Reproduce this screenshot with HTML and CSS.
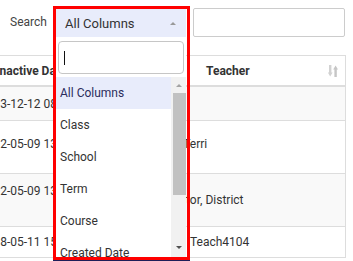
FILE: index.html
```html
<!DOCTYPE html>
<html>
<head>
<meta charset="utf-8">
<link rel="stylesheet" href="styles.css">
</head>
<body>
<div class="page">
  <div class="toolbar">
    <label class="search-label">Search</label>
    <div class="s2">
      <div class="s2-selection"><span class="s2-text">All Columns</span><span class="s2-arrow"></span></div>
      <div class="s2-dropdown">
        <div class="s2-search"><div class="s2-field"><span class="caret"></span></div></div>
        <div class="s2-results">
          <ul class="s2-options">
            <li class="opt active">All Columns</li>
            <li class="opt">Class</li>
            <li class="opt">School</li>
            <li class="opt">Term</li>
            <li class="opt">Course</li>
            <li class="opt">Created Date</li>
          </ul>
          <div class="sb">
            <div class="sb-btn sb-up"></div>
            <div class="sb-thumb"></div>
            <div class="sb-btn sb-down"></div>
          </div>
        </div>
      </div>
    </div>
    <input class="search-input" type="text">
  </div>
  <table class="grid">
    <colgroup><col class="c1"><col class="c2"><col class="c3"></colgroup>
    <thead>
      <tr>
        <th>Inactive Date</th>
        <th></th>
        <th class="th-sort"><div class="th-inner"><span>Teacher</span>
          <svg class="sort-icon" width="10" height="12" viewBox="0 0 10 12"><path d="M1 0h2.4v7.5H4.6L2.2 11.5 -0.2 7.5H1z" fill="#d2d2d2"/><path d="M6.4 12h2.4V4.5H10L7.6 0.5 5.2 4.5H6.4z" fill="#c6c6c6"/></svg>
        </div></th>
      </tr>
    </thead>
    <tbody>
      <tr class="stripe r1"><td>2013-12-12 08:14:32</td><td></td><td></td></tr>
      <tr class="r2"><td>2012-05-09 13:22:10</td><td></td><td class="shift-a">Smith, Terri</td></tr>
      <tr class="stripe r3"><td>2012-05-09 13:22:<br>10</td><td></td><td class="shift-b">Administrator, District</td></tr>
      <tr class="r4"><td>2018-05-11 15:03:47</td><td></td><td>Teach4104</td></tr>
    </tbody>
  </table>
</div>
<div class="annot"></div>
</body>
</html>
```
FILE: styles.css
```css
body {
  margin: 0;
  width: 353px;
  height: 261px;
  overflow: hidden;
  position: relative;
  background: #fff;
  color: #333;
  font-family: Roboto, "Liberation Sans", sans-serif;
}

.toolbar {
  display: flex;
  align-items: flex-start;
  padding-top: 8px;
  height: 29px;
}

.search-label {
  width: 46px;
  padding-left: 10px;
  font-size: 12px;
  line-height: 29px;
  color: #444;
}

.s2 {
  position: relative;
  width: 130px;
  margin-top: 1px;
}

.s2-selection {
  height: 28px;
  background: #e8ecfb;
  display: flex;
  align-items: center;
  justify-content: space-between;
  padding: 0 10px 0 9px;
  font-size: 13px;
  color: #333;
}

.s2-arrow {
  width: 0;
  height: 0;
  border-left: 3px solid transparent;
  border-right: 3px solid transparent;
  border-bottom: 3px solid #999;
}

.search-input {
  margin: 0 0 0 7px;
  width: 152px;
  height: 29px;
  box-sizing: border-box;
  border: 1px solid #ccc;
  border-radius: 2px;
  padding: 0;
  outline: none;
}

.s2-dropdown {
  position: absolute;
  top: 28px;
  left: 0;
  width: 130px;
  background: #fff;
  z-index: 2;
}

.s2-search {
  padding: 4px 2px 3px 2px;
}

.s2-field {
  height: 33px;
  box-sizing: border-box;
  border: 1px solid #c6c6c6;
  border-radius: 4px;
  display: flex;
  align-items: center;
  padding-left: 5px;
}

.caret {
  width: 1px;
  height: 14px;
  background: #111;
}

.s2-results {
  display: flex;
  height: 180px;
}

.s2-options {
  list-style: none;
  margin: 0;
  padding: 0;
  flex: 1;
  overflow: hidden;
}

.opt {
  height: 32px;
  line-height: 32px;
  padding-left: 4px;
  font-size: 12px;
  color: #333;
  white-space: nowrap;
}

.opt.active {
  background: #e8ecfb;
  color: #2b2d5c;
}

.sb {
  width: 15px;
  background: #f1f1f1;
  display: flex;
  flex-direction: column;
}

.sb-btn {
  height: 15px;
  box-sizing: border-box;
  display: flex;
  justify-content: center;
  flex: none;
}

.sb-up {
  padding-top: 7px;
}

.sb-up::before {
  content: "";
  width: 0;
  height: 0;
  border-left: 3px solid transparent;
  border-right: 3px solid transparent;
  border-bottom: 3px solid #a3a3a3;
}

.sb-thumb {
  margin: 1px 0 0 2px;
  height: 102px;
  background: #c1c1c1;
  flex: none;
}

.sb-down {
  margin-top: auto;
  padding-top: 4px;
}

.sb-down::before {
  content: "";
  width: 0;
  height: 0;
  border-left: 3px solid transparent;
  border-right: 3px solid transparent;
  border-top: 3px solid #505050;
}

.grid {
  border-collapse: separate;
  border-spacing: 0;
  table-layout: fixed;
  width: 375px;
  margin-left: -29px;
  margin-top: 18px;
  border: 1px solid #ddd;
  border-bottom: 0;
  font-size: 12px;
  color: #333;
}

.c1 { width: 84px; }
.c2 { width: 126px; }
.c3 { width: 163px; }

.grid th {
  height: 29px;
  padding: 0 0 0 24px;
  text-align: left;
  font-weight: 700;
  border-bottom: 2px solid #ddd;
  white-space: nowrap;
  overflow: hidden;
}

.grid th.th-sort {
  padding-right: 7px;
}

.th-inner {
  display: flex;
  align-items: center;
  justify-content: space-between;
}

.sort-icon {
  display: block;
}

.grid td {
  padding: 0 8px;
  border-bottom: 1px solid #ddd;
  white-space: nowrap;
  overflow: hidden;
  vertical-align: middle;
  line-height: 18px;
}

.stripe td {
  background: #f9f9f9;
}

.r1 td { height: 33px; }
.r2 td { height: 46px; padding-bottom: 6px; }
.r3 td { height: 52px; }
.r4 td { height: 30px; }

.shift-a { text-indent: -43px; }
.shift-b { text-indent: -62px; }

.annot {
  position: absolute;
  left: 53px;
  top: 6px;
  width: 137px;
  height: 254px;
  box-sizing: border-box;
  border: 3px solid #f00;
  box-shadow: 0 1px 0 #1e1e5a;
  pointer-events: none;
  z-index: 3;
}
```
